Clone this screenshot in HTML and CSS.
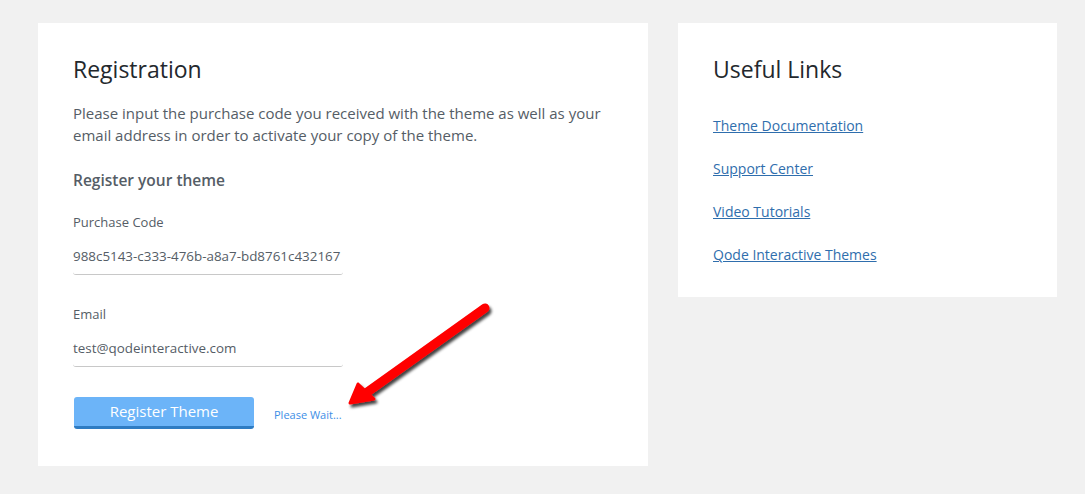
FILE: index.html
```html
<!DOCTYPE html>
<html>
<head>
<meta charset="utf-8">
<link rel="stylesheet" href="styles.css">
</head>
<body>
<div class="page">
  <section class="card card-main">
    <h2 class="card-title">Registration</h2>
    <p class="intro">Please input the purchase code you received with the theme as well as your email address in order to activate your copy of the theme.</p>
    <h3 class="sub-title">Register your theme</h3>
    <div class="field">
      <label class="field-label">Purchase Code</label>
      <div class="field-input">988c5143-c333-476b-a8a7-bd8761c432167</div>
    </div>
    <div class="field">
      <label class="field-label">Email</label>
      <div class="field-input">test@qodeinteractive.com</div>
    </div>
    <div class="actions">
      <button class="btn">Register Theme</button>
      <span class="wait">Please Wait...</span>
    </div>
    <svg class="arrow" width="170" height="125" viewBox="0 0 170 125">
      <defs>
        <filter id="sh" x="-20%" y="-20%" width="150%" height="150%">
          <feGaussianBlur in="SourceAlpha" stdDeviation="1.6"/>
          <feOffset dx="2" dy="3" result="b"/>
          <feComponentTransfer><feFuncA type="linear" slope="0.75"/></feComponentTransfer>
          <feMerge><feMergeNode/><feMergeNode in="SourceGraphic"/></feMerge>
        </filter>
      </defs>
      <g filter="url(#sh)">
        <line x1="145" y1="13" x2="26" y2="98" stroke="#ff0000" stroke-width="9" stroke-linecap="round"/>
        <polygon points="10,108 18,89 34,104" fill="#ff0000" stroke="#ff0000" stroke-width="3" stroke-linejoin="round"/>
      </g>
    </svg>
  </section>
  <section class="card card-side">
    <h2 class="card-title">Useful Links</h2>
    <ul class="links">
      <li><a href="#">Theme Documentation</a></li>
      <li><a href="#">Support Center</a></li>
      <li><a href="#">Video Tutorials</a></li>
      <li><a href="#">Qode Interactive Themes</a></li>
    </ul>
  </section>
</div>
</body>
</html>
```

FILE: styles.css
```css
* { box-sizing: border-box; }
html, body { margin: 0; padding: 0; }
body {
  background: #f1f1f1;
  font-family: "Open Sans", "Noto Sans", sans-serif;
  color: #555d66;
  width: 1085px;
  height: 494px;
  overflow: hidden;
}
.page {
  display: flex;
  align-items: flex-start;
  gap: 30px;
  padding: 23px 0 0 38px;
}
.card {
  background: #fff;
  position: relative;
}
.card-main {
  width: 610px;
  height: 443px;
  padding: 30px 35px 0 35px;
}
.card-side {
  width: 379px;
  height: 274px;
  padding: 30px 35px 0 35px;
}
.card-title {
  margin: 0;
  font-weight: 400;
  font-size: 23px;
  line-height: 32px;
  color: #23282d;
}
.intro {
  margin: 17px 0 0;
  font-size: 15px;
  line-height: 22px;
  color: #555d66;
}
.sub-title {
  margin: 23px 0 0;
  font-size: 15.5px;
  font-weight: 600;
  line-height: 22px;
  color: #555d66;
}
.field {
  margin-top: 21px;
  width: 270px;
}
.field + .field { margin-top: 29px; }
.field-label {
  display: block;
  font-size: 13px;
  line-height: 20px;
  color: #555d66;
}
.field-input {
  margin-top: 14px;
  font-size: 13.4px;
  line-height: 20px;
  padding-bottom: 8px;
  color: #555d66;
  border-bottom: 1px solid #c8c8c8;
  border-radius: 0 0 3px 3px;
  white-space: nowrap;
}
.actions {
  margin-top: 30px;
  display: flex;
  align-items: center;
  gap: 20px;
  padding-left: 1px;
}
.btn {
  width: 180px;
  height: 32px;
  border: 0;
  border-bottom: 3px solid #2e7cc3;
  border-radius: 3px;
  background: #6cb4f8;
  color: #fff;
  font-family: "Open Sans", "Noto Sans", sans-serif;
  font-size: 15px;
  padding: 0;
  line-height: 29px;
}
.wait {
  font-size: 11px;
  color: #3d8ee6;
  margin-top: 2px;
}
.arrow {
  position: absolute;
  left: 302px;
  top: 272px;
}
.links {
  list-style: none;
  margin: 31px 0 0;
  padding: 0;
  display: flex;
  flex-direction: column;
  gap: 23px;
}
.links li {
  font-size: 14px;
  line-height: 20px;
}
.links a {
  color: #2f6ead;
  text-decoration: underline;
}
```
